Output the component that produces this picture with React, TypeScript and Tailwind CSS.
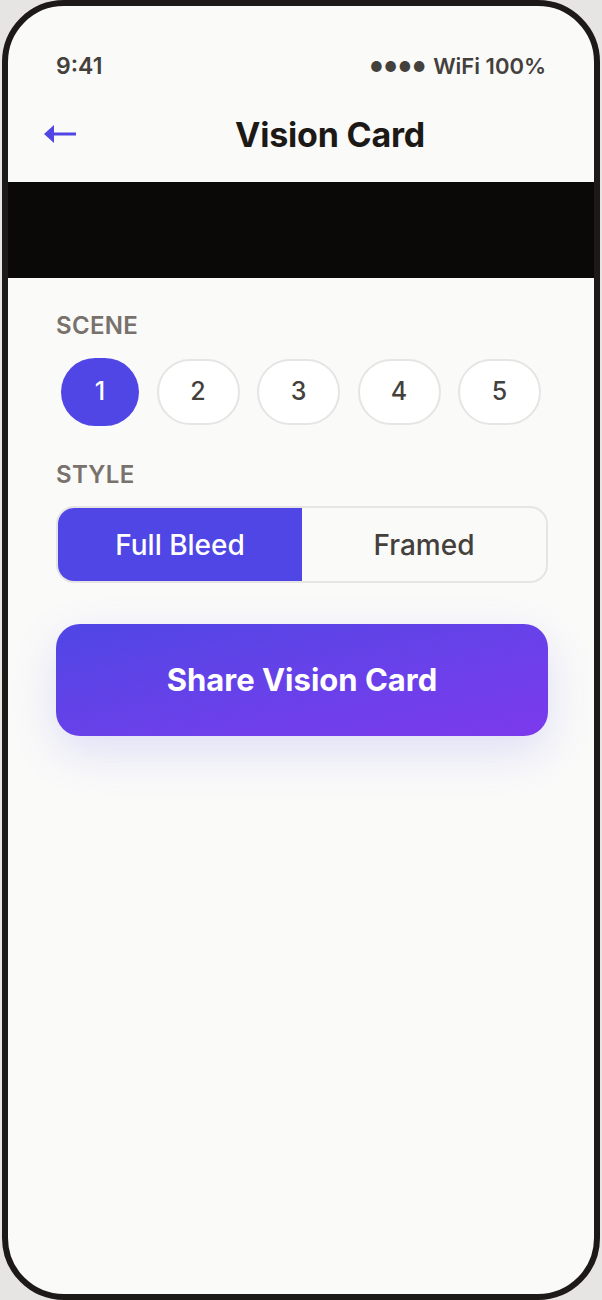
import React, { useState } from "react";

export default function App() {
  const [scene, setScene] = useState(1);
  const [style, setStyle] = useState<"full" | "framed">("full");

  return (
    <div className="w-[602px] h-[1300px] bg-[#e7e5e4] font-['Inter',sans-serif]">
      <div className="ml-[2px] w-[598px] h-[1300px] rounded-[62px] border-[6px] border-[#1c1917] bg-[#fafaf9] overflow-hidden flex flex-col">
        {/* Status bar */}
        <div className="pt-[40px] h-[80px] px-[48px] flex items-center justify-between text-[#44403c]">
          <span className="text-[23px] font-semibold">9:41</span>
          <span className="flex items-center gap-[6px] text-[22px] font-semibold">
            <span className="text-[14px] tracking-[1.5px]">●●●●</span>
            <span>WiFi 100%</span>
          </span>
        </div>

        {/* Header */}
        <div className="h-[96px] pl-[36px] pr-[10px] flex items-center">
          <button className="w-[32px] h-[24px] flex items-center">
            <svg width="32" height="20" viewBox="0 0 32 20">
              <path d="M0 10 L10 1 L10 19 Z" fill="#4f46e5" />
              <rect x="8" y="8.5" width="24" height="3" fill="#4f46e5" />
            </svg>
          </button>
          <h1 className="flex-1 text-center text-[34px] font-bold text-[#1c1917] tracking-[-0.2px]">
            Vision Card
          </h1>
        </div>

        {/* Preview */}
        <div className="h-[96px] bg-[#0a0908]" />

        {/* Controls */}
        <div className="pl-[48px] pr-[46px]">
          <div className="mt-[34px] h-[28px] leading-[28px] text-[24px] font-semibold text-[#78716c] tracking-[0.3px]">
            SCENE
          </div>
          <div className="mt-[18px] ml-[5px] h-[68px] flex items-center gap-[17.5px]">
            {[1, 2, 3, 4, 5].map((n) =>
              n === scene ? (
                <button
                  key={n}
                  onClick={() => setScene(n)}
                  className="w-[78px] h-[68px] rounded-[34px] bg-[#4f46e5] text-white text-[25px] font-medium"
                >
                  {n}
                </button>
              ) : (
                <button
                  key={n}
                  onClick={() => setScene(n)}
                  className="w-[83px] h-[66px] rounded-[33px] border-2 border-[#e7e5e4] bg-white text-[#44403c] text-[25px] font-medium"
                >
                  {n}
                </button>
              )
            )}
          </div>

          <div className="mt-[35px] h-[28px] leading-[28px] text-[24px] font-semibold text-[#78716c] tracking-[0.3px]">
            STYLE
          </div>
          <div className="mt-[17px] h-[77px] rounded-[18px] border-2 border-[#e7e5e4] bg-[#fafaf9] overflow-hidden flex">
            <button
              onClick={() => setStyle("full")}
              className={
                style === "full"
                  ? "flex-1 bg-[#4f46e5] text-white text-[28px] font-medium"
                  : "flex-1 text-[#44403c] text-[28px] font-medium"
              }
            >
              Full Bleed
            </button>
            <button
              onClick={() => setStyle("framed")}
              className={
                style === "framed"
                  ? "flex-1 bg-[#4f46e5] text-white text-[28px] font-medium"
                  : "flex-1 text-[#44403c] text-[28px] font-medium"
              }
            >
              Framed
            </button>
          </div>

          <button className="mt-[41px] w-full h-[112px] rounded-[24px] bg-linear-to-br from-[#4f46e5] to-[#7c3aed] text-white text-[31px] font-bold shadow-[0_16px_44px_rgba(99,102,241,0.18)]">
            Share Vision Card
          </button>
        </div>
      </div>
    </div>
  );
}
